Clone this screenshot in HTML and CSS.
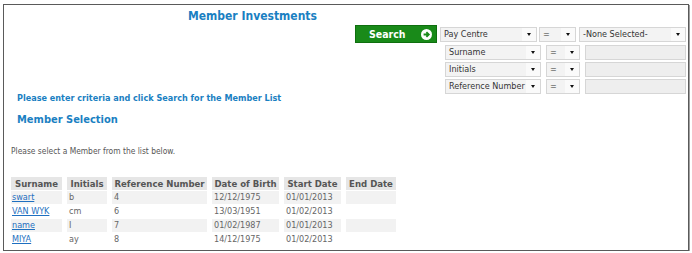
FILE: index.html
```html
<!DOCTYPE html>
<html>
<head>
<meta charset="utf-8">
<link rel="stylesheet" href="styles.css">
</head>
<body>
<div class="frame">
  <h1 class="title">Member Investments</h1>
  <div class="search">
    <div class="row first">
      <button class="btn" type="button"><span>Search</span>
        <svg class="go" width="11" height="11" viewBox="0 0 11 11"><circle cx="5.5" cy="5.5" r="5.5" fill="#fff"/><path d="M2.6 5.5H7.6M5.4 3.1L7.8 5.5L5.4 7.9" stroke="#1a8a1a" stroke-width="1.8" fill="none"/></svg>
      </button>
      <div class="sel f1">Pay Centre<span class="arr"></span></div>
      <div class="sel o1">=<span class="arr"></span></div>
      <div class="sel v1">-None Selected-<span class="arr"></span></div>
    </div>
    <div class="row">
      <div class="sel f2">Surname<span class="arr"></span></div>
      <div class="sel o2">=<span class="arr"></span></div>
      <div class="inp"></div>
    </div>
    <div class="row">
      <div class="sel f2">Initials<span class="arr"></span></div>
      <div class="sel o2">=<span class="arr"></span></div>
      <div class="inp"></div>
    </div>
    <div class="row">
      <div class="sel f2">Reference Number<span class="arr"></span></div>
      <div class="sel o2">=<span class="arr"></span></div>
      <div class="inp"></div>
    </div>
  </div>
  <p class="hint">Please enter criteria and click Search for the Member List</p>
  <h2 class="sub">Member Selection</h2>
  <p class="note">Please select a Member from the list below.</p>
  <table class="grid">
    <thead>
      <tr><th class="c1">Surname</th><th class="c2">Initials</th><th class="c3">Reference Number</th><th class="c4">Date of Birth</th><th class="c5">Start Date</th><th class="c6">End Date</th></tr>
    </thead>
    <tbody>
      <tr class="alt"><td><a href="#">swart</a></td><td>b</td><td>4</td><td>12/12/1975</td><td>01/01/2013</td><td></td></tr>
      <tr><td><a href="#">VAN WYK</a></td><td>cm</td><td>6</td><td>13/03/1951</td><td>01/02/2013</td><td></td></tr>
      <tr class="alt"><td><a href="#">name</a></td><td>I</td><td>7</td><td>01/02/1987</td><td>01/01/2013</td><td></td></tr>
      <tr><td><a href="#">MIYA</a></td><td>ay</td><td>8</td><td>14/12/1975</td><td>01/02/2013</td><td></td></tr>
    </tbody>
  </table>
</div>
</body>
</html>
```
FILE: styles.css
```css
* { box-sizing: border-box; }
html, body { margin: 0; padding: 0; background: #fff; }
body {
  font-family: "DejaVu Sans Condensed", "DejaVu Sans", sans-serif;
  font-stretch: condensed;
  color: #555;
}
.frame {
  margin: 4px 3px 0 3px;
  height: 247px;
  border: 1px solid #5a5a5a;
  box-shadow: 1px 1px 0 #a0a0a0;
  overflow: hidden;
}
.title {
  margin: 3px 0 0 0;
  padding-left: 184px;
  font-size: 12px;
  line-height: 16px;
  font-weight: bold;
  color: #1a80c2;
}
.search {
  margin-top: 1px;
  padding-right: 2px;
  display: flex;
  flex-direction: column;
  align-items: flex-end;
  gap: 2px;
}
.row {
  display: flex;
  gap: 5px;
  height: 15px;
}
.row.first {
  height: 18px;
  gap: 2px;
  align-items: flex-end;
}
.btn {
  width: 82px;
  height: 18px;
  margin: 0 1px 0 0;
  padding: 0 4px 0 13px;
  border: 1px solid #0f6f0f;
  background: #198a19;
  color: #fff;
  font-family: inherit;
  font-stretch: condensed;
  font-size: 10.5px;
  font-weight: bold;
  display: flex;
  align-items: center;
  justify-content: space-between;
}
.sel {
  position: relative;
  height: 15px;
  border: 1px solid #d6d6d6;
  background: #f3f3f3;
  font-size: 9px;
  line-height: 13px;
  color: #333;
  padding-left: 3px;
  white-space: nowrap;
}
.first .sel { margin-bottom: 1px; }
.arr {
  position: absolute;
  right: 0;
  top: 0;
  width: 14px;
  height: 13px;
  background: #fafafa;
}
.arr::after {
  content: "";
  position: absolute;
  left: 5px;
  top: 5px;
  border-left: 2.5px solid transparent;
  border-right: 2.5px solid transparent;
  border-top: 3px solid #111;
}
.f1 { width: 97px; }
.o1 { width: 37px; }
.v1 { width: 107px; margin-left: 1px; }
.f2 { width: 96px; }
.o2 { width: 34px; }
.inp {
  width: 101px;
  height: 15px;
  border: 1px solid #d6d6d6;
  background: #eeeeee;
}
.hint {
  margin: 0;
  padding-left: 13px;
  font-size: 9px;
  line-height: 9px;
  font-weight: bold;
  color: #1a80c2;
}
.sub {
  margin: 9px 0 0 0;
  padding-left: 13px;
  font-size: 11px;
  line-height: 15px;
  font-weight: bold;
  color: #1a80c2;
}
.note {
  margin: 19px 0 0 0;
  padding-left: 7px;
  font-size: 8.4px;
  line-height: 11px;
  color: #555;
}
.grid {
  margin: 19px 0 0 2px;
  border-collapse: separate;
  border-spacing: 5px 1px;
  table-layout: fixed;
  font-size: 9px;
}
.grid th {
  height: 13px;
  padding: 0 2px;
  background: #e6e6e6;
  color: #555;
  font-weight: bold;
  font-size: 9.5px;
  text-align: center;
  line-height: 13px;
  white-space: nowrap;
}
.grid td {
  height: 13px;
  padding: 0 2px;
  color: #666;
  line-height: 13px;
  white-space: nowrap;
}
.grid td:first-child { padding-left: 1px; }
.grid tr.alt td { background: #f2f2f2; }
.grid a { color: #1e6fc0; text-decoration: underline; }
.c1 { width: 51px; }
.c2 { width: 40px; }
.c3 { width: 95px; }
.c4 { width: 67px; }
.c5 { width: 57px; }
.c6 { width: 50px; }
```
